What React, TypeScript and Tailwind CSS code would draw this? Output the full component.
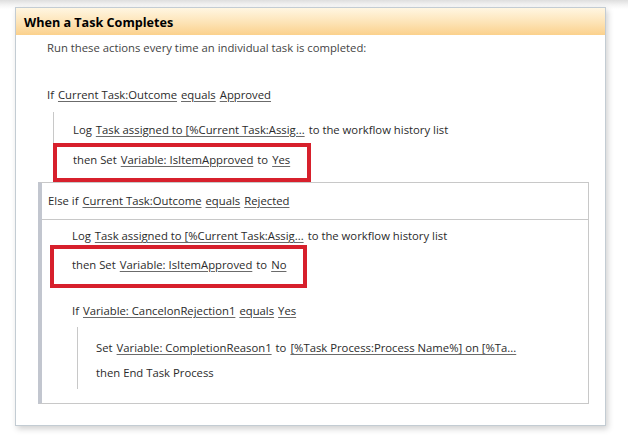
import React from "react";

const L = ({ children }: { children: React.ReactNode }) => (
  <span className="underline decoration-[#6b6b6b] underline-offset-2">{children}</span>
);

const App = () => {
  return (
    <div
      className="w-[628px] h-[439px] overflow-hidden bg-[linear-gradient(to_bottom,#dedede,#f4f4f4_5px,#ffffff_9px)] pt-[7px] pl-[15px] text-[#2b2b2b] text-[11.3px]"
      style={{ fontFamily: '"Open Sans", "Noto Sans", sans-serif' }}
    >
      <div className="w-[591px] h-[419px] border border-[#c3ccd3] bg-white shadow-[2px_3px_6px_rgba(0,0,0,0.18)]">
        {/* header */}
        <div className="h-[27px] flex items-center pl-[8px] pt-[3px] bg-[linear-gradient(to_bottom,#fff6e2,#fde3b5_55%,#fbd18c)] text-[12.6px] font-bold text-black">
          When a Task Completes
        </div>

        <div className="h-[26px] flex items-center pl-[31px] text-[#444]">
          Run these actions every time an individual task is completed:
        </div>

        <div className="mt-[24px] h-[20px] flex items-center pl-[31px] gap-[4px]">
          <span>If</span>
          <L>Current Task:Outcome</L>
          <L>equals</L>
          <L>Approved</L>
        </div>

        {/* if branch */}
        <div className="mt-[7px] ml-[37px] border-l border-[#c8c8c8]">
          <div className="pt-[8px] h-[28px] flex items-center pl-[19px] gap-[4px]">
            <span>Log</span>
            <L>Task assigned to [%Current Task:Assig...</L>
            <span>to the workflow history list</span>
          </div>
          <div className="mt-[3px] -ml-[1px] w-[258px] h-[39px] border-4 border-[#d7202c] flex items-center pl-[16px] pb-[4px] gap-[4px]">
            <span>then Set</span>
            <L>Variable: IsItemApproved</L>
            <span>to</span>
            <L>Yes</L>
          </div>
        </div>

        {/* else if branch */}
        <div className="ml-[22px] w-[551px] h-[222px] border-l-4 border-l-[#c2c6cf] border-y border-r border-[#c8c8c8]">
          <div className="h-[37px] flex items-center pl-[6px] gap-[4px] border-b border-[#c8c8c8]">
            <span>Else if</span>
            <L>Current Task:Outcome</L>
            <L>equals</L>
            <L>Rejected</L>
          </div>
          <div className="mt-[8px] h-[17px] flex items-center pl-[30px] gap-[4px]">
            <span>Log</span>
            <L>Task assigned to [%Current Task:Assig...</L>
            <span>to the workflow history list</span>
          </div>
          <div className="ml-[8px] w-[257px] h-[43px] border-4 border-[#d7202c] flex items-center pl-[18px] pb-[2px] gap-[4px]">
            <span>then Set</span>
            <L>Variable: IsItemApproved</L>
            <span>to</span>
            <L>No</L>
          </div>
          <div className="mt-[13px] h-[20px] flex items-center pl-[30px] gap-[4px]">
            <span>If</span>
            <L>Variable: CancelonRejection1</L>
            <L>equals</L>
            <L>Yes</L>
          </div>
          <div className="mt-[6px] ml-[35px] border-l border-[#c8c8c8] pt-[11px] pb-[6px]">
            <div className="h-[20px] flex items-center pl-[18px] gap-[4px]">
              <span>Set</span>
              <L>Variable: CompletionReason1</L>
              <span>to</span>
              <L>[%Task Process:Process Name%] on [%Ta...</L>
            </div>
            <div className="mt-[5px] h-[20px] flex items-center pl-[18px]">
              then End Task Process
            </div>
          </div>
        </div>
      </div>
    </div>
  );
};

export default App;
